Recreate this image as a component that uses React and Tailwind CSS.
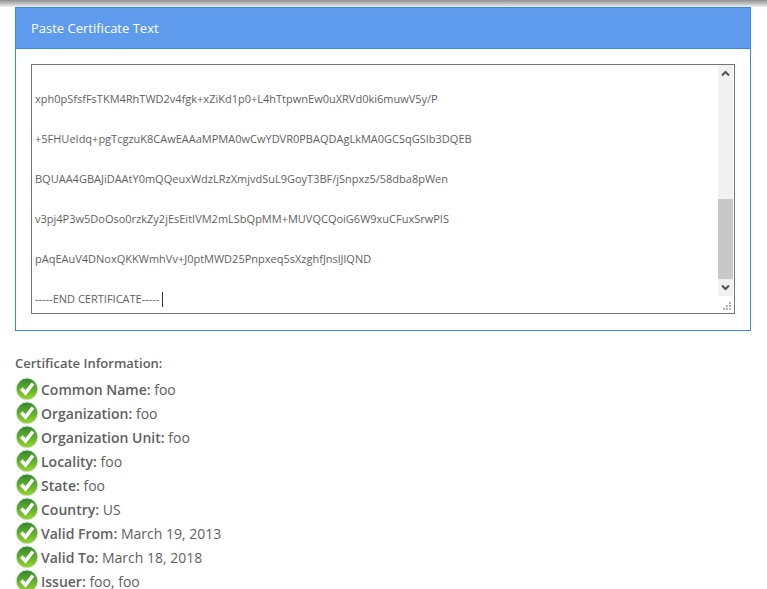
const certLines = [
  "xph0pSfsfFsTKM4RhTWD2v4fgk+xZiKd1p0+L4hTtpwnEw0uXRVd0ki6muwV5y/P",
  "+5FHUeIdq+pgTcgzuK8CAwEAAaMPMA0wCwYDVR0PBAQDAgLkMA0GCSqGSIb3DQEB",
  "BQUAA4GBAJiDAAtY0mQQeuxWdzLRzXmjvdSuL9GoyT3BF/jSnpxz5/58dba8pWen",
  "v3pj4P3w5DoOso0rzkZy2jEsEitIVM2mLSbQpMM+MUVQCQoiG6W9xuCFuxSrwPIS",
  "pAqEAuV4DNoxQKKWmhVv+J0ptMWD25Pnpxeq5sXzghfJnslJlQND",
]

const certInfo = [
  ["Common Name:", "foo"],
  ["Organization:", "foo"],
  ["Organization Unit:", "foo"],
  ["Locality:", "foo"],
  ["State:", "foo"],
  ["Country:", "US"],
  ["Valid From:", "March 19, 2013"],
  ["Valid To:", "March 18, 2018"],
  ["Issuer:", "foo, foo"],
]

function CheckIcon({ id }) {
  return (
    <svg width="24" height="24" viewBox="0 0 24 24" className="mb-[2px] shrink-0">
      <defs>
        <linearGradient id={id} x1="0" y1="0" x2="0" y2="1">
          <stop offset="0" stopColor="#2f8a2c" />
          <stop offset="1" stopColor="#93d32f" />
        </linearGradient>
      </defs>
      <circle cx="12" cy="12" r="11.5" fill="#e6e6e6" />
      <circle cx="12" cy="12" r="10.4" fill={`url(#${id})`} />
      <path d="M6.3 11.5 L10.5 16 L18 6.5" fill="none" stroke="#fff" strokeWidth="3.6" />
    </svg>
  )
}

export default function App() {
  return (
    <div className="h-[589px] overflow-hidden bg-white font-['Open_Sans',sans-serif] text-[#5f5f5f]">
      <div className="h-[7px] bg-gradient-to-b from-[#8f8f8f] to-[#f2f2f2]" />

      <div className="mx-[15px] mr-4 h-[324px] border border-[#3b86ee]">
        <div className="flex h-[41px] items-center border-b border-[#3b86ee] bg-[#5e9bec] px-[15px] pt-[2px] text-[13px] text-white">
          Paste Certificate Text
        </div>
        <div className="px-[15px] pt-[15px]">
          <div className="flex h-[250px] border border-[#767676]">
            <div className="min-w-0 flex-1 overflow-hidden pl-[3px] pt-[24px] text-[11px] leading-5">
              {certLines.map((line) => (
                <div key={line} className="mb-5 whitespace-nowrap">{line}</div>
              ))}
              <div className="flex items-center whitespace-nowrap">
                -----END CERTIFICATE-----
                <span className="ml-[3px] h-[15px] w-px bg-[#333]" />
              </div>
            </div>
            <div className="flex w-[16px] shrink-0 flex-col pr-px">
              <div className="flex flex-1 flex-col bg-[#f1f1f1]">
                <div className="flex h-[17px] items-center justify-center">
                  <svg width="9" height="7" viewBox="0 0 9 7">
                    <path d="M1 5.5 L4.5 2 L8 5.5" fill="none" stroke="#505050" strokeWidth="2" />
                  </svg>
                </div>
                <div className="flex-1" />
                <div className="h-[80px] bg-[#c8c8c8]" />
                <div className="flex h-[17px] items-center justify-center">
                  <svg width="9" height="7" viewBox="0 0 9 7">
                    <path d="M1 1.5 L4.5 5 L8 1.5" fill="none" stroke="#505050" strokeWidth="2" />
                  </svg>
                </div>
              </div>
              <div className="flex h-[17px] items-end justify-end pb-[3px] pr-[2px]">
                <svg width="8" height="8" viewBox="0 0 8 8" fill="#b5b5b5">
                  <rect x="6" y="0" width="2" height="2" />
                  <rect x="3" y="3" width="2" height="2" />
                  <rect x="6" y="3" width="2" height="2" />
                  <rect x="0" y="6" width="2" height="2" />
                  <rect x="3" y="6" width="2" height="2" />
                  <rect x="6" y="6" width="2" height="2" />
                </svg>
              </div>
            </div>
          </div>
        </div>
      </div>

      <div className="px-[15px] pt-[22px]">
        <div className="mb-[5px] text-[13px] font-semibold leading-[20px]">Certificate Information:</div>
        {certInfo.map(([label, value], i) => (
          <div key={label} className="flex h-6 items-center text-sm">
            <CheckIcon id={`check-${i}`} />
            <span className="ml-[2px]">
              <span className="font-semibold">{label}</span> {value}
            </span>
          </div>
        ))}
      </div>
    </div>
  )
}
